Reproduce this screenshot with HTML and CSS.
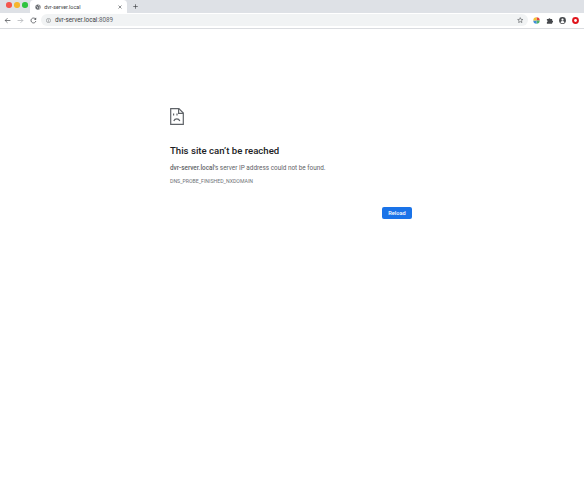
FILE: index.html
```html
<!DOCTYPE html>
<html lang="en">
<head>
    <meta charset="UTF-8">
    <title>dvr-server.local</title>
    <link rel="stylesheet" href="styles.css">
</head>
<body>
    <div class="tabstrip">
        <div class="traffic">
            <span class="light red"></span>
            <span class="light yellow"></span>
            <span class="light green"></span>
        </div>
        <div class="tab">
            <svg class="favicon" viewBox="0 0 16 16"><circle cx="8" cy="8" r="7" fill="#5f6368"/><path d="M3 5l4 3-1 4M9 2l1 3 4 1M10 9l3 1-3 4" fill="none" stroke="#fff" stroke-width="1.6"/></svg>
            <span class="tab-title">dvr-server.local</span>
            <svg class="tab-close" viewBox="0 0 8 8"><path d="M1 1l6 6M7 1L1 7" stroke="#45484c" stroke-width="1.2"/></svg>
        </div>
        <svg class="new-tab" viewBox="0 0 10 10"><path d="M5 .5v9M.5 5h9" stroke="#3c4043" stroke-width="1.3"/></svg>
    </div>

    <div class="toolbar">
        <svg class="nav-icon" viewBox="0 0 12 12"><path d="M11 6H2M6 2L2 6l4 4" fill="none" stroke="#45484c" stroke-width="1.2"/></svg>
        <svg class="nav-icon" viewBox="0 0 12 12"><path d="M1 6h9M6 2l4 4-4 4" fill="none" stroke="#a9acb0" stroke-width="1.2"/></svg>
        <svg class="nav-icon" viewBox="0 0 12 12"><path d="M10 7a4.2 4.2 0 1 1-.6-3.4" fill="none" stroke="#45484c" stroke-width="1.3"/><path d="M10.6 1v3.6H7z" fill="#45484c"/></svg>
        <div class="omnibox">
            <svg class="info-icon" viewBox="0 0 10 10"><circle cx="5" cy="5" r="4.2" fill="none" stroke="#5f6368" stroke-width=".9"/><path d="M5 4.4v3M5 2.6v1" stroke="#5f6368" stroke-width="1"/></svg>
            <span class="url">dvr-server.local<span class="port">:8089</span></span>
            <svg class="star" viewBox="0 0 12 12"><path d="M6 1.2l1.4 3.2 3.4.3-2.6 2.2.8 3.4L6 8.5l-3 1.8.8-3.4L1.2 4.7l3.4-.3z" fill="none" stroke="#45484c" stroke-width="1"/></svg>
        </div>
        <div class="extensions">
            <svg class="ext" viewBox="0 0 12 12"><path d="M6 .5a5.5 5.5 0 0 1 5.5 5.5H6z" fill="#e8453c"/><path d="M11.5 6A5.5 5.5 0 0 1 6 11.5V6z" fill="#4db36a"/><path d="M6 11.5A5.5 5.5 0 0 1 .5 6H6z" fill="#3f8fd8"/><path d="M.5 6A5.5 5.5 0 0 1 6 .5V6z" fill="#f2c531"/></svg>
            <svg class="ext" viewBox="0 0 12 12"><path d="M1.5 3.5h2.7a1.8 1.8 0 0 1 3.4 0h2.9v2.7a1.7 1.7 0 0 1 0 3.4v1.9h-9V8.8a1.8 1.8 0 0 0 0-3.4z" fill="#45484c"/></svg>
            <svg class="ext" viewBox="0 0 12 12"><circle cx="6" cy="6" r="5.8" fill="#45484c"/><circle cx="6" cy="4.5" r="1.9" fill="#fff"/><path d="M2.4 8.8a4.4 4.4 0 0 1 7.2 0 4.6 4.6 0 0 1-7.2 0z" fill="#fff"/></svg>
            <svg class="ext" viewBox="0 0 12 12"><circle cx="6" cy="6" r="5.8" fill="#e0141c"/><circle cx="6" cy="6" r="2.4" fill="#fff"/></svg>
        </div>
    </div>

    <div class="error-page">
        <svg class="sad-page" viewBox="0 0 14 17"><path d="M.7.7h8.2l4.4 4.4v11.2H.7z" fill="none" stroke="#5f6368" stroke-width="1.2"/><path d="M8.6.7v4.6h4.7" fill="none" stroke="#5f6368" stroke-width="1.2"/><path d="M3.6 5.6v2M7 5.6v2" stroke="#5f6368" stroke-width="1.2"/><path d="M3.8 13a3.2 3.2 0 0 1 6 0" fill="none" stroke="#5f6368" stroke-width="1.2"/></svg>
        <h1>This site can’t be reached</h1>
        <p class="message"><strong>dvr-server.local</strong>’s server IP address could not be found.</p>
        <div class="error-code">DNS_PROBE_FINISHED_NXDOMAIN</div>
        <div class="actions">
            <button class="reload">Reload</button>
        </div>
    </div>
</body>
</html>
```

FILE: styles.css
```css
html, body {
    margin: 0;
    padding: 0;
    background: #fff;
    font-family: Roboto, "Liberation Sans", Arial, sans-serif;
}
.tabstrip {
    display: flex;
    align-items: flex-end;
    height: 13px;
    background: #dee1e6;
}
.traffic {
    display: flex;
    gap: 2.5px;
    align-self: flex-start;
    width: 24px;
    margin: 2.2px 0 0 6.2px;
}
.light {
    width: 5.5px;
    height: 5.5px;
    border-radius: 50%;
}
.red { background: #f4564e; }
.yellow { background: #f6b62e; }
.green { background: #2ec440; }
.tab {
    display: flex;
    align-items: center;
    box-sizing: border-box;
    width: 97px;
    height: 13px;
    padding: 0 5px 0 5px;
    background: #fff;
    border-radius: 4px 4px 0 0;
}
.favicon {
    width: 6px;
    height: 6px;
}
.tab-title {
    flex: 1;
    margin-left: 3px;
    font-size: 5.4px;
    color: #3c4043;
}
.tab-close {
    width: 4px;
    height: 4px;
}
.new-tab {
    width: 5px;
    height: 5px;
    margin: 0 0 4px 6px;
}
.toolbar {
    display: flex;
    align-items: center;
    height: 14px;
    padding: 0 0 1px 3.5px;
    background: #fff;
    border-bottom: 1px solid #dadce0;
}
.nav-icon {
    width: 7px;
    height: 7px;
    margin-right: 6px;
}
.omnibox {
    display: flex;
    align-items: center;
    box-sizing: border-box;
    width: 487px;
    height: 12px;
    margin-left: -1.5px;
    padding: 0 5px 0 5px;
    background: #f1f3f4;
    border-radius: 6px;
}
.info-icon {
    width: 5px;
    height: 5px;
}
.url {
    flex: 1;
    margin-left: 4px;
    font-size: 6.3px;
    color: #3c4043;
}
.port { color: #5f6368; }
.star {
    width: 6.5px;
    height: 6.5px;
}
.extensions {
    display: flex;
    gap: 6px;
    margin-left: 5px;
}
.ext {
    width: 7px;
    height: 7px;
}
.error-page {
    box-sizing: border-box;
    width: 242px;
    margin-left: 170px;
    padding-top: 79px;
}
.sad-page {
    display: block;
    width: 14px;
    height: 17px;
}
h1 {
    margin: 19px 0 0;
    font-size: 9.6px;
    font-weight: 500;
    line-height: 13px;
    color: #202124;
}
.message {
    margin: 6px 0 0;
    font-size: 6.4px;
    line-height: 10px;
    color: #5f6368;
}
.message strong { font-weight: 500; }
.error-code {
    margin-top: 5px;
    font-size: 5.2px;
    line-height: 7px;
    color: #6f7377;
}
.actions {
    display: flex;
    justify-content: flex-end;
    margin-top: 22px;
}
.reload {
    width: 30px;
    height: 12px;
    padding: 0;
    background: #1a73e8;
    color: #fff;
    border: none;
    border-radius: 2px;
    font-family: inherit;
    font-size: 5.6px;
    font-weight: 500;
}
```
